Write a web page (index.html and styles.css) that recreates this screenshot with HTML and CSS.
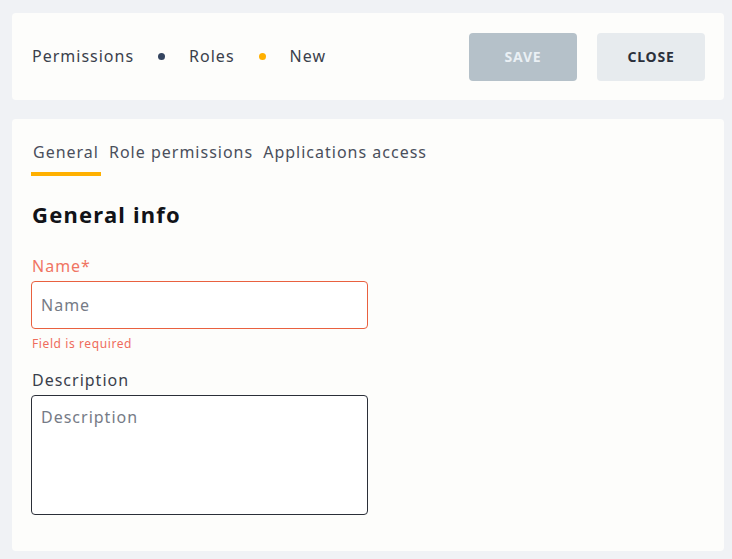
FILE: index.html
```html
<html>
<head>
<link rel="stylesheet" href="styles.css">
</head>
<body>
  <div class="card topbar">
    <div class="crumbs">
      <span class="crumb">Permissions</span>
      <span class="dot"></span>
      <span class="crumb">Roles</span>
      <span class="dot current"></span>
      <span class="crumb">New</span>
    </div>
    <div class="actions">
      <button class="btn btn-save" disabled>SAVE</button>
      <button class="btn btn-close">CLOSE</button>
    </div>
  </div>

  <div class="card content">
    <div class="tabs">
      <span class="tab active">General</span>
      <span class="tab">Role permissions</span>
      <span class="tab">Applications access</span>
    </div>

    <h2 class="section-title">General info</h2>

    <div class="field has-error">
      <label class="field-label">Name*</label>
      <input class="field-input" type="text" placeholder="Name">
      <div class="field-error">Field is required</div>
    </div>

    <div class="field">
      <label class="field-label">Description</label>
      <textarea class="field-input field-area" placeholder="Description"></textarea>
    </div>
  </div>
</body>
</html>
```

FILE: styles.css
```css
body {
  margin: 0;
  padding: 13px 8px 0 12px;
  background: #f0f2f5;
  font-family: "Noto Sans", sans-serif;
  letter-spacing: 1px;
  color: #3a3f4b;
}

.card {
  background: #fdfdfb;
  border-radius: 4px;
}

.topbar {
  height: 87px;
  box-sizing: border-box;
  padding: 20px 19px 20px 20px;
  display: flex;
  align-items: center;
  justify-content: space-between;
}

.crumbs {
  display: flex;
  align-items: center;
  gap: 24px;
  margin-top: -1px;
  font-size: 16px;
}

.dot {
  width: 7px;
  height: 7px;
  border-radius: 50%;
  background: #34445f;
}

.dot.current {
  background: #ffb000;
}

.actions {
  display: flex;
  gap: 20px;
}

.btn {
  width: 108px;
  height: 48px;
  border: none;
  border-radius: 4px;
  font-family: inherit;
  font-size: 14px;
  font-weight: 700;
  letter-spacing: 0.8px;
}

.btn-save {
  background: #b5c1c9;
  color: #eaf0f4;
}

.btn-close {
  background: #e7ebee;
  color: #2b303b;
}

.content {
  margin-top: 19px;
  padding: 20px 20px 36px 20px;
}

.tabs {
  display: flex;
  gap: 6px;
  margin-left: -1px;
  font-size: 16px;
  color: #4a4f5b;
}

.tab {
  line-height: 24px;
  padding: 1px 2px 8px 2px;
  border-bottom: 4px solid transparent;
}

.tab.active {
  border-bottom-color: #ffb000;
}

.section-title {
  margin: 24px 0 0 0;
  font-size: 22px;
  font-weight: 700;
  line-height: 28px;
  letter-spacing: 1.2px;
  color: #111318;
}

.field {
  width: 337px;
  margin-top: 26px;
  margin-left: -1px;
}

.field + .field {
  margin-top: 16px;
}

.field-label {
  display: block;
  font-size: 16px;
  line-height: 24px;
  margin-bottom: 3px;
  padding-left: 1px;
  color: #3a3f4b;
}

.field-input {
  display: block;
  width: 100%;
  height: 48px;
  box-sizing: border-box;
  padding: 0 9px;
  border: 1px solid #2b2f38;
  border-radius: 4px;
  background: #fff;
  font-family: inherit;
  font-size: 16px;
  letter-spacing: 1px;
  color: #3a3f4b;
}

.field-input::placeholder {
  color: #767b86;
}

.field-area {
  height: 120px;
  padding-top: 10px;
  resize: none;
}

.has-error .field-label {
  color: #f07563;
}

.has-error .field-input {
  border-color: #e9603f;
}

.field-error {
  margin-top: 7px;
  padding-left: 1px;
  font-size: 12px;
  line-height: 16px;
  letter-spacing: 0.6px;
  color: #ef6c5c;
}
```
